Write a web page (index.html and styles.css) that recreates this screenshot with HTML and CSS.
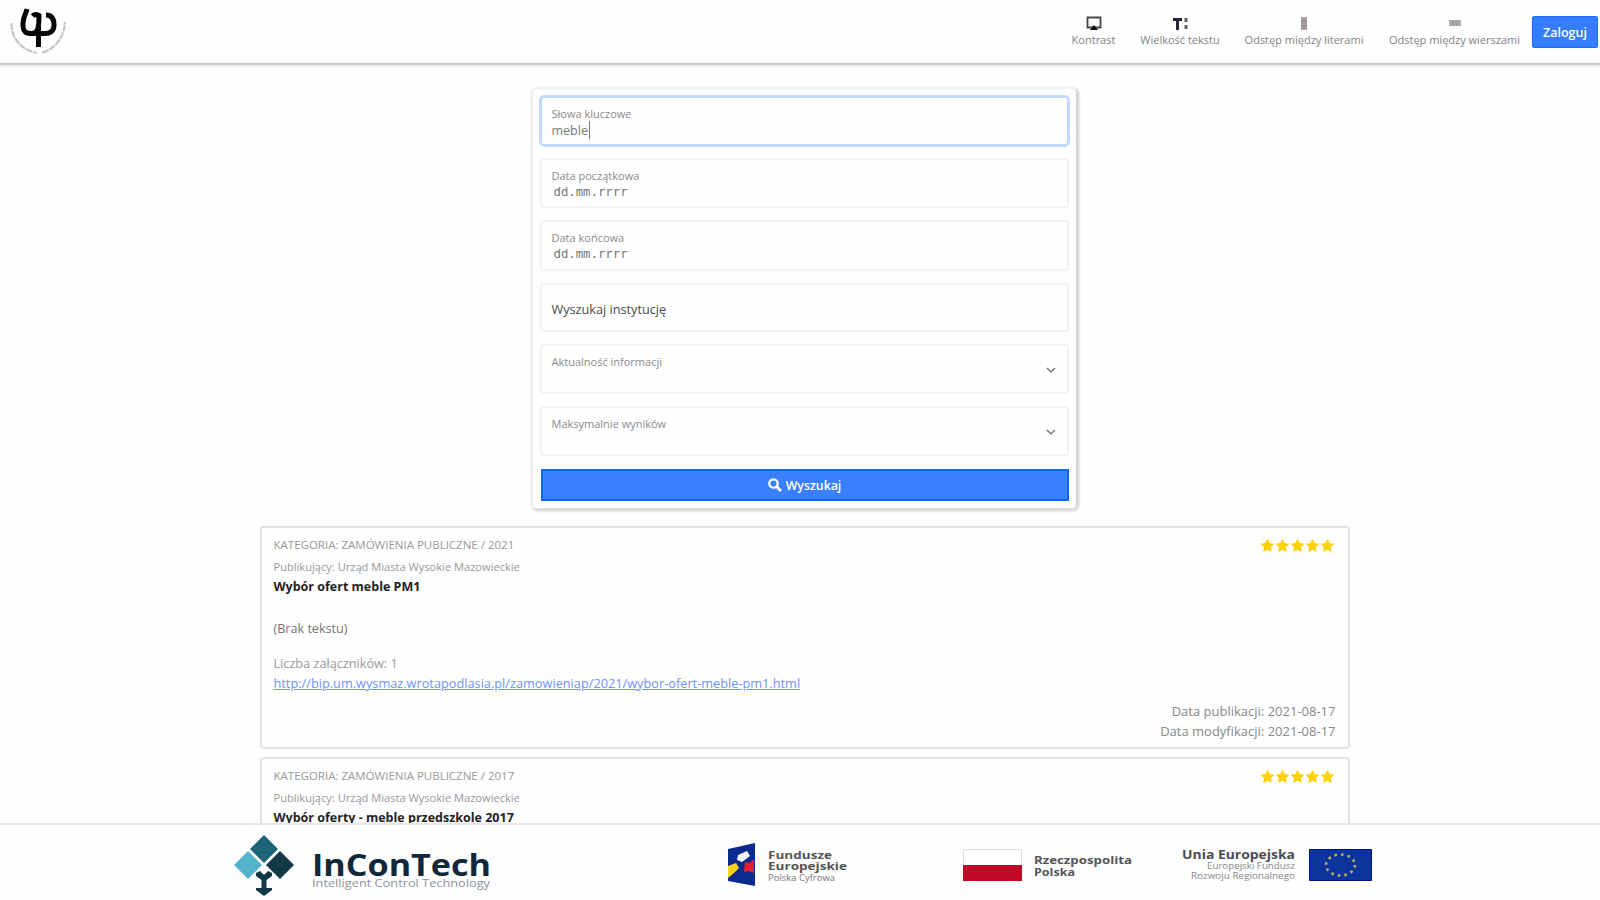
FILE: index.html
```html
<!DOCTYPE html>
<html lang="pl">
<head>
<meta charset="utf-8">
<title>Wyszukiwarka</title>
<link rel="stylesheet" href="styles.css">
</head>
<body>
<div class="page">
<header class="topbar">
  <svg class="logo" width="60" height="50" viewBox="0 0 60 50" fill="none">
    <path d="M3.500 17C3 32 13 44 29 47M34 46.500C47 43 56 32 57 16" stroke="#c4c4c4" stroke-width="2.200" stroke-dasharray="7 .8"/>
    <path d="M19 3C18 8 15.500 10 15 17C14.500 27 19 27.500 24 27.500C29 27.500 31 24 31 9.500C28 8 26 8.500 24.500 10M38 9C43 9 46 12 46 19C46 25 42 27.500 37 27.500H24M30.500 20V41" stroke="#060606" stroke-width="5"/>
  </svg>
  <nav class="tools">
    <div class="tool contrast">
      <svg width="16" height="15" viewBox="0 0 16 15"><path d="M1.500 1.500h13v10h-13z" fill="none" stroke="#444" stroke-width="1.800"/><path d="M4 14l4-5 4 5z" fill="#111"/></svg>
      <span>Kontrast</span>
    </div>
    <div class="tool size">
      <svg width="17" height="15" viewBox="0 0 17 15"><path d="M1 2h9v3H7v9H4V5H1z" fill="#25253a"/><path d="M14 2v4M14 9v4" stroke="#69605f" stroke-width="3"/></svg>
      <span>Wielkość tekstu</span>
    </div>
    <div class="tool letters">
      <svg width="8" height="15" viewBox="0 0 8 15"><path d="M1 1h6v13H1z" fill="#aa9ca2"/><path d="M1 5h6M1 10h6" stroke="#8c7f86"/></svg>
      <span>Odstęp między literami</span>
    </div>
    <div class="tool lines">
      <svg width="14" height="15" viewBox="0 0 14 15"><path d="M1 4h12v6H1z" fill="#aaa"/><path d="M5 4v6M9 4v6" stroke="#949494"/></svg>
      <span>Odstęp między wierszami</span>
    </div>
  </nav>
  <button class="login">Zaloguj</button>
</header>

<main>
  <form class="search">
    <div class="field focus"><label>Słowa kluczowe</label><div class="value typed">meble<i class="caret"></i></div></div>
    <div class="field"><label>Data początkowa</label><div class="value date">dd.mm.rrrr</div></div>
    <div class="field"><label>Data końcowa</label><div class="value date">dd.mm.rrrr</div></div>
    <div class="field single"><span>Wyszukaj instytucję</span></div>
    <div class="field select"><label>Aktualność informacji</label><svg width="10" height="7" viewBox="0 0 10 7"><path d="M1 1l4 4 4-4" fill="none" stroke="#777" stroke-width="1.500"/></svg></div>
    <div class="field select"><label>Maksymalnie wyników</label><svg width="10" height="7" viewBox="0 0 10 7"><path d="M1 1l4 4 4-4" fill="none" stroke="#777" stroke-width="1.500"/></svg></div>
    <button type="button" class="submit"><svg width="14" height="14" viewBox="0 0 14 14" fill="none" stroke="#fff"><circle cx="5.500" cy="5.500" r="4.200" stroke-width="2.200"/><path d="M8.500 8.500l4.500 4.500" stroke-width="2.800"/></svg><span>Wyszukaj</span></button>
  </form>

  <article class="result">
    <div class="head"><span class="cat">KATEGORIA: ZAMÓWIENIA PUBLICZNE / 2021</span>
      <svg class="stars" width="75" height="15" viewBox="0 0 75 15"><defs><path id="star" d="M7.500 0.700l2.100 4.400 4.800.7-3.500 3.400.8 4.800-4.200-2.300-4.300 2.300.8-4.800L.6 5.800l4.800-.7z" fill="#ffd208"/></defs><use href="#star"/><use href="#star" x="15"/><use href="#star" x="30"/><use href="#star" x="45"/><use href="#star" x="60"/></svg></div>
    <div class="pub">Publikujący: Urząd Miasta Wysokie Mazowieckie</div>
    <h2>Wybór ofert meble PM1</h2>
    <p class="text">(Brak tekstu)</p>
    <div class="count">Liczba załączników: 1</div>
    <a class="link">http://bip.um.wysmaz.wrotapodlasia.pl/zamowieniap/2021/wybor-ofert-meble-pm1.html</a>
    <div class="dates"><div>Data publikacji: 2021-08-17</div><div>Data modyfikacji: 2021-08-17</div></div>
  </article>

  <article class="result">
    <div class="head"><span class="cat">KATEGORIA: ZAMÓWIENIA PUBLICZNE / 2017</span>
      <svg class="stars" width="75" height="15" viewBox="0 0 75 15"><use href="#star"/><use href="#star" x="15"/><use href="#star" x="30"/><use href="#star" x="45"/><use href="#star" x="60"/></svg></div>
    <div class="pub">Publikujący: Urząd Miasta Wysokie Mazowieckie</div>
    <h2>Wybór oferty - meble przedszkole 2017</h2>
  </article>
</main>

<footer class="partners">
  <svg class="p1" width="262" height="66" viewBox="0 0 262 66">
    <path d="M30 1l14 14-14 14-14-14z" fill="#1f6378"/><path d="M14 17l14 14-14 14L0 31z" fill="#53b2cc"/><path d="M46 17l14 14-14 14-14-14z" fill="#123846"/>
    <path d="M22 39l4-2 4 4 4-4 4 2v3l-5.500 4v8h5.500v2l-8 6-8-6v-2h5.500v-8L22 42z" fill="#123846"/>
    <text class="brand" x="78" y="42" textLength="179" lengthAdjust="spacingAndGlyphs">InConTech</text>
    <text class="tag" x="78" y="53" textLength="178" lengthAdjust="spacingAndGlyphs">Intelligent Control Technology</text>
  </svg>
  <svg class="p2" width="124" height="46" viewBox="0 0 124 46">
    <path d="M1 7L28 1v43L1 39z" fill="#0b2a8e"/><path d="M11 13l9-4 3 5-8 6-5-2z" fill="#f4f7ff"/><path d="M1 24l8-3 3 5-5 5-6 5z" fill="#ffd21d"/><path d="M18 20l5 1 4-4v14l-5-2-5 1z" fill="#e81d32"/>
    <text class="fe" x="41" y="17" textLength="64" lengthAdjust="spacingAndGlyphs">Fundusze</text>
    <text class="fe" x="41" y="28" textLength="79" lengthAdjust="spacingAndGlyphs">Europejskie</text>
    <text class="fes" x="41" y="39" textLength="67" lengthAdjust="spacingAndGlyphs">Polska Cyfrowa</text>
  </svg>
  <svg class="p3" width="172" height="34" viewBox="0 0 172 34">
    <path d="M.5 1.500h58v31H.5z" fill="#fff" stroke="#ddd"/><path d="M0 17h59v16H0z" fill="#bd0826"/>
    <text class="rp" x="71" y="16" textLength="98" lengthAdjust="spacingAndGlyphs">Rzeczpospolita</text>
    <text class="rp" x="71" y="28" textLength="41" lengthAdjust="spacingAndGlyphs">Polska</text>
  </svg>
  <svg class="p4" width="192" height="34" viewBox="0 0 192 34">
    <text class="ue" x="1" y="11" textLength="113" lengthAdjust="spacingAndGlyphs">Unia Europejska</text>
    <text class="ues" x="26" y="21" textLength="88" lengthAdjust="spacingAndGlyphs">Europejski Fundusz</text>
    <text class="ues" x="10" y="30.500" textLength="104" lengthAdjust="spacingAndGlyphs">Rozwoju Regionalnego</text>
    <path d="M128.500 1.500h62v31h-62z" fill="#0b349d" stroke="#001386"/>
    <ellipse cx="159.500" cy="17" rx="14.500" ry="10.500" fill="none" stroke="#b9ad68" stroke-width="2.600" stroke-dasharray="2.600 4"/>
  </svg>
</footer>
</div>
</body>
</html>
```
FILE: styles.css
```css
* { box-sizing: border-box; }
body { margin: 0; background: #fff; font-family: "Open Sans", "Noto Sans", sans-serif; }
.page { height: 900px; overflow: hidden; display: flex; flex-direction: column; background: #fefefe; }
.topbar { flex: none; height: 65px; display: flex; align-items: flex-start; border-bottom: 2px solid #c9c9c9; box-shadow: 0 1px 2px #ddd; padding: 0 2px 0 8px; }
.logo { margin-top: 6px; flex: none; }
.tools { margin-left: auto; display: flex; gap: 26px; padding-top: 16px; margin-right: 12px; }
.tool { display: flex; flex-direction: column; align-items: center; white-space: nowrap; font-size: 11px; line-height: 17px; color: #828282; }
.contrast { width: 43px; }
.size { width: 78px; }
.letters { width: 118px; }
.lines { width: 131px; }
.login { margin-top: 16px; width: 66px; height: 32px; border: 1px solid #1a6dff; border-radius: 2px; background: #367cff; color: #fff; font: 600 12.500px "Open Sans", sans-serif; padding: 0; }
main { flex: 1; min-height: 0; overflow: hidden; padding-top: 22px; display: flex; flex-direction: column; align-items: center; gap: 8px; }
.search { flex: none; width: 547px; height: 423px; margin: 0 0 8px 8px; border: 2px solid #eee; border-right-color: #d4d4d6; border-bottom-color: #dcdcde; border-radius: 6px; box-shadow: 1px 1px 3px #ccc; padding: 7px; display: flex; flex-direction: column; gap: 12px; }
.field { height: 50.200px; border: 2px solid #f1f2f2; border-radius: 4px; padding: 7px 10px; font-size: 11px; line-height: 17px; color: #8b8b8b; }
.field label { display: block; width: max-content; }
.focus { border-color: #c0d8fc; box-shadow: 0 0 0 1px #c5dcff; }
.value { display: flex; align-items: center; height: 16px; }
.typed { color: #777; font-size: 12.500px; }
.caret { width: 1px; height: 18px; background: #777; margin-left: 1px; }
.date { font: 12.300px "DejaVu Sans Mono", monospace; color: #777; padding-left: 2px; }
.single { display: flex; align-items: center; padding-top: 10px; color: #4b4b4b; font-size: 12.700px; }
.select { display: flex; justify-content: space-between; padding-right: 11px; }
.select svg { margin-top: 14px; }
.submit { height: 32px; margin-left: 1px; border: 2px solid #0868ff; background: #397fff; color: #fff; font: 600 12.300px "Open Sans", sans-serif; display: flex; align-items: center; justify-content: center; gap: 4px; padding: 0; margin-top: 1px; }
.result { flex: none; width: 1090px; height: 223px; margin-left: 9px; border: 2px solid #e3e3e4; border-radius: 4px; padding: 6px 12px; font-size: 12.600px; color: #999; white-space: nowrap; }
.head { display: flex; justify-content: space-between; align-items: center; height: 20px; font-size: 11.500px; }
.stars { flex: none; margin: 3px 1px 0 0; }
.pub { font-size: 11.100px; line-height: 20px; padding-top: 3px; }
h2 { margin: 0; font-size: 12.500px; line-height: 20px; color: #222; }
.text { margin: 22px 0 0; line-height: 20px; color: #747474; }
.count { margin-top: 14px; line-height: 20px; font-size: 12.700px; }
.link { display: inline-block; line-height: 20px; font-size: 12.750px; color: #6f92fb; text-decoration: underline; }
.dates { display: flex; flex-direction: column; align-items: flex-end; margin-top: 8px; line-height: 20px; font-size: 13px; color: #888; }
.partners { flex: none; height: 77px; border-top: 2px solid #e7e7e7; display: flex; align-items: center; padding: 4px 0 0 234px; background: #fefefe; }
.p1 { margin-top: 5px; }
.p2 { margin-left: 231px; }
.p3 { margin-left: 112px; }
.p4 { margin-left: 46px; }
.brand { font: 700 31px "Open Sans", sans-serif; fill: #10283a; }
.tag { font: 11px "Open Sans", sans-serif; fill: #8b949b; }
.fe, .rp { font: 700 10.500px "Open Sans", sans-serif; fill: #555; }
.fes { font: 9px "Open Sans", sans-serif; fill: #777; }
.ue { font: 700 11.500px "Open Sans", sans-serif; fill: #4b4b4b; }
.ues { font: 8.500px "Open Sans", sans-serif; fill: #888; }
```
